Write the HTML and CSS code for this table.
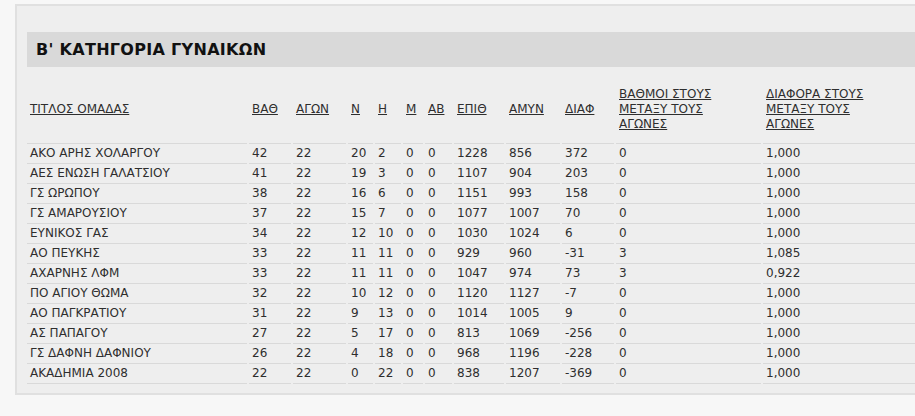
FILE: index.html
```html
<!DOCTYPE html>
<html lang="el">
<head>
<meta charset="utf-8">
<title>Β' ΚΑΤΗΓΟΡΙΑ ΓΥΝΑΙΚΩΝ</title>
<link rel="stylesheet" href="styles.css">
</head>
<body>
<div class="panel">
  <h2 class="title">Β' ΚΑΤΗΓΟΡΙΑ ΓΥΝΑΙΚΩΝ</h2>
  <table class="standings">
    <colgroup>
      <col class="c-team"><col class="c-pts"><col class="c-gp"><col class="c-w"><col class="c-l"><col class="c-m"><col class="c-ab"><col class="c-for"><col class="c-ag"><col class="c-diff"><col class="c-h2h"><col class="c-h2hd">
    </colgroup>
    <thead>
      <tr>
        <th><a href="#">ΤΙΤΛΟΣ ΟΜΑΔΑΣ</a></th>
        <th><a href="#">ΒΑΘ</a></th>
        <th><a href="#">ΑΓΩΝ</a></th>
        <th><a href="#">Ν</a></th>
        <th><a href="#">Η</a></th>
        <th><a href="#">Μ</a></th>
        <th><a href="#">ΑΒ</a></th>
        <th><a href="#">ΕΠΙΘ</a></th>
        <th><a href="#">ΑΜΥΝ</a></th>
        <th><a href="#">ΔΙΑΦ</a></th>
        <th class="wrap"><a href="#">ΒΑΘΜΟΙ ΣΤΟΥΣ ΜΕΤΑΞΥ ΤΟΥΣ ΑΓΩΝΕΣ</a></th>
        <th class="wrap"><a href="#">ΔΙΑΦΟΡΑ ΣΤΟΥΣ ΜΕΤΑΞΥ ΤΟΥΣ ΑΓΩΝΕΣ</a></th>
      </tr>
    </thead>
    <tbody>
      <tr><td>ΑΚΟ ΑΡΗΣ ΧΟΛΑΡΓΟΥ</td><td>42</td><td>22</td><td>20</td><td>2</td><td>0</td><td>0</td><td>1228</td><td>856</td><td>372</td><td>0</td><td>1,000</td></tr>
      <tr><td>ΑΕΣ ΕΝΩΣΗ ΓΑΛΑΤΣΙΟΥ</td><td>41</td><td>22</td><td>19</td><td>3</td><td>0</td><td>0</td><td>1107</td><td>904</td><td>203</td><td>0</td><td>1,000</td></tr>
      <tr><td>ΓΣ ΩΡΩΠΟΥ</td><td>38</td><td>22</td><td>16</td><td>6</td><td>0</td><td>0</td><td>1151</td><td>993</td><td>158</td><td>0</td><td>1,000</td></tr>
      <tr><td>ΓΣ ΑΜΑΡΟΥΣΙΟΥ</td><td>37</td><td>22</td><td>15</td><td>7</td><td>0</td><td>0</td><td>1077</td><td>1007</td><td>70</td><td>0</td><td>1,000</td></tr>
      <tr><td>ΕΥΝΙΚΟΣ ΓΑΣ</td><td>34</td><td>22</td><td>12</td><td>10</td><td>0</td><td>0</td><td>1030</td><td>1024</td><td>6</td><td>0</td><td>1,000</td></tr>
      <tr><td>ΑΟ ΠΕΥΚΗΣ</td><td>33</td><td>22</td><td>11</td><td>11</td><td>0</td><td>0</td><td>929</td><td>960</td><td>-31</td><td>3</td><td>1,085</td></tr>
      <tr><td>ΑΧΑΡΝΗΣ ΛΦΜ</td><td>33</td><td>22</td><td>11</td><td>11</td><td>0</td><td>0</td><td>1047</td><td>974</td><td>73</td><td>3</td><td>0,922</td></tr>
      <tr><td>ΠΟ ΑΓΙΟΥ ΘΩΜΑ</td><td>32</td><td>22</td><td>10</td><td>12</td><td>0</td><td>0</td><td>1120</td><td>1127</td><td>-7</td><td>0</td><td>1,000</td></tr>
      <tr><td>ΑΟ ΠΑΓΚΡΑΤΙΟΥ</td><td>31</td><td>22</td><td>9</td><td>13</td><td>0</td><td>0</td><td>1014</td><td>1005</td><td>9</td><td>0</td><td>1,000</td></tr>
      <tr><td>ΑΣ ΠΑΠΑΓΟΥ</td><td>27</td><td>22</td><td>5</td><td>17</td><td>0</td><td>0</td><td>813</td><td>1069</td><td>-256</td><td>0</td><td>1,000</td></tr>
      <tr><td>ΓΣ ΔΑΦΝΗ ΔΑΦΝΙΟΥ</td><td>26</td><td>22</td><td>4</td><td>18</td><td>0</td><td>0</td><td>968</td><td>1196</td><td>-228</td><td>0</td><td>1,000</td></tr>
      <tr><td>ΑΚΑΔΗΜΙΑ 2008</td><td>22</td><td>22</td><td>0</td><td>22</td><td>0</td><td>0</td><td>838</td><td>1207</td><td>-369</td><td>0</td><td>1,000</td></tr>
    </tbody>
  </table>
</div>
</body>
</html>
```

FILE: styles.css
```css
html, body {
  margin: 0;
  padding: 0;
  background: #f7f7f7;
  overflow: hidden;
}
body {
  font-family: "DejaVu Sans", Verdana, sans-serif;
  font-size: 12px;
  color: #2e2e2e;
}
.panel {
  margin: 4px 0 0 15px;
  width: 930px;
  background: #eeeeee;
  border: 2px solid #e0e0e0;
  border-right: none;
  padding: 26px 0 9px 10px;
}
.title {
  margin: 0;
  height: 35px;
  line-height: 35px;
  padding-left: 9px;
  background: #d9d9d9;
  font-size: 16px;
  letter-spacing: 0.3px;
  font-weight: bold;
  color: #111;
}
.standings {
  margin: 10px 0 0 -2px;
  border-collapse: separate;
  border-spacing: 2px 0;
  table-layout: fixed;
  width: 900px;
}
.c-team { width: 220px; }
.c-pts { width: 42px; }
.c-gp { width: 53px; }
.c-w { width: 25px; }
.c-l { width: 26px; }
.c-m { width: 20px; }
.c-ab { width: 27px; }
.c-for { width: 50px; }
.c-ag { width: 54px; }
.c-diff { width: 52px; }
.c-h2h { width: 145px; }
.standings th {
  text-align: left;
  font-weight: normal;
  vertical-align: middle;
  padding: 10px 3px 11px;
  line-height: 15px;
  border-bottom: 1px solid #d9d9d9;
}
.standings th.wrap {
  padding-right: 30px;
}
.standings th a {
  color: #2e2e2e;
  text-decoration: underline;
}
.standings td {
  padding: 2px 3px;
  line-height: 15px;
  white-space: nowrap;
  border-bottom: 1px solid #d9d9d9;
}
```
